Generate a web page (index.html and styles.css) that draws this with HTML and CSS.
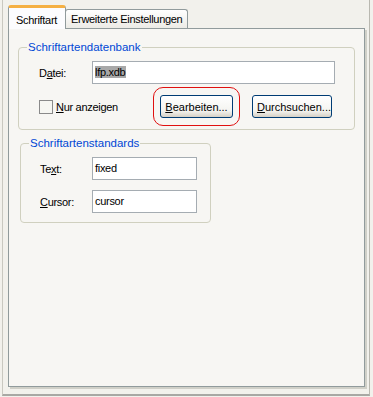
FILE: index.html
```html
<!DOCTYPE html>
<html lang="de">
<head>
  <meta charset="UTF-8" />
  <title>Schriftart</title>
  <link rel="stylesheet" href="styles.css">
</head>
<body>
  <div class="window">
    <div class="tabs">
      <div class="tab active">Schriftart</div>
      <div class="tab">Erweiterte Einstellungen</div>
    </div>
    <div class="panel">
      <fieldset class="group group-db">
        <legend>Schriftartendatenbank</legend>
        <div class="group-body">
          <div class="row">
            <label class="lbl">D<u>a</u>tei:</label>
            <div class="input wide"><span class="sel">lfp.xdb</span></div>
          </div>
          <div class="row row-buttons">
            <label class="check"><span class="box"></span><span><u>N</u>ur anzeigen</span></label>
            <div class="highlight">
              <button class="btn"><u>B</u>earbeiten...</button>
            </div>
            <button class="btn"><u>D</u>urchsuchen...</button>
          </div>
        </div>
      </fieldset>

      <fieldset class="group group-std">
        <legend>Schriftartenstandards</legend>
        <div class="group-body">
          <div class="row">
            <label class="lbl">Te<u>x</u>t:</label>
            <div class="input short">fixed</div>
          </div>
          <div class="row">
            <label class="lbl"><u>C</u>ursor:</label>
            <div class="input short">cursor</div>
          </div>
        </div>
      </fieldset>
    </div>
  </div>
</body>
</html>
```

FILE: styles.css
```css
body {
  margin: 0;
  background-color: #f2f1ec;
  font-family: "Liberation Sans", Arial, sans-serif;
  font-size: 11px;
  letter-spacing: -0.3px;
  color: #000;
}
.window {
  width: 368px;
  height: 396px;
  box-sizing: border-box;
  margin-left: 2px;
  border-left: 1px solid #c9c8c0;
  border-right: 1px solid #b9b8b0;
  border-bottom: 2px solid #a8a8a4;
  padding: 8px 4px 0 5px;
}
.tabs {
  display: flex;
  align-items: flex-end;
  height: 20px;
  position: relative;
  z-index: 1;
}
.tab {
  height: 18px;
  line-height: 19px;
  padding: 0 5px;
  border: 1px solid #919b9c;
  border-bottom: none;
  border-radius: 3px 3px 0 0;
  background: linear-gradient(#ffffff, #ecebe6);
  margin-left: -1px;
}
.tab.active {
  height: 21px;
  line-height: 24px;
  margin-left: 0;
  padding: 0 7px;
  width: 42px;
  background: #fcfcfe;
  border-top: 3px solid #f5b043;
  margin-bottom: -1px;
}
.panel {
  height: 359px;
  box-sizing: border-box;
  border: 1px solid #919b9c;
  background: #f7f6f3;
  box-shadow: 2px 2px 0 #d0d0c8;
  padding: 12px 9px 0 9px;
}
.group {
  margin: 0;
  border: 1px solid #d0d0bf;
  border-radius: 4px;
  padding: 0;
  box-sizing: border-box;
}
.group legend {
  color: #0046d5;
  padding: 0 1px;
  margin-left: 8px;
  font-size: 11.5px;
  letter-spacing: 0;
}
.group-db {
  width: 337px;
  height: 89px;
}
.group-db .group-body {
  padding: 8px 0 0 20px;
}
.group-std {
  width: 191px;
  height: 86px;
  margin: 7px 0 0 2px;
}
.group-std .group-body {
  padding: 8px 0 0 19px;
}
.row {
  display: flex;
  align-items: center;
}
.lbl {
  width: 53px;
}
.group-std .lbl {
  width: 52px;
}
.group-std .row + .row {
  margin-top: 10px;
}
.input {
  height: 23px;
  box-sizing: border-box;
  border: 1px solid #a5acb2;
  background: #fff;
  padding: 2px 0 0 2px;
  line-height: 16px;
}
.wide {
  width: 243px;
}
.short {
  width: 105px;
}
.sel {
  background: #a8a8a8;
  padding-right: 1px;
}
.row-buttons {
  margin-top: 3px;
}
.check {
  display: flex;
  align-items: center;
  gap: 3px;
  width: 114px;
}
.box {
  width: 12px;
  height: 12px;
  border: 1px solid #8a8a8a;
  background: #f6f6f2;
}
.highlight {
  border: 1px solid #e01010;
  border-radius: 10px;
  padding: 7px 6px;
}
.btn {
  font: inherit;
  height: 23px;
  padding: 0 4px;
  border: 1px solid #003c74;
  border-radius: 3px;
  background: linear-gradient(#ffffff, #f4f4f0 70%, #d6d0c5);
  color: #000;
}
.highlight .btn {
  width: 73px;
}
.highlight + .btn {
  margin-left: 12px;
  width: 80px;
}
```
